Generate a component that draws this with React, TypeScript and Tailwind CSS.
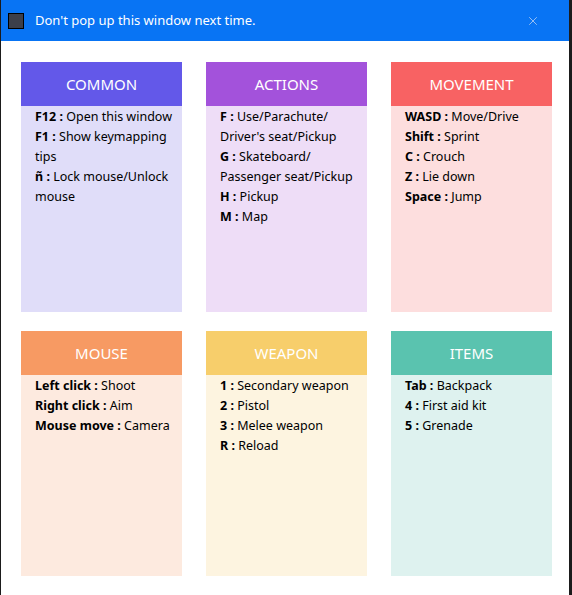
import { X } from "lucide-react";

type Item = { k: string; v: string };

const groups: {
  title: string;
  head: string;
  body: string;
  items: Item[];
}[] = [
  {
    title: "COMMON",
    head: "bg-[#6358e9]",
    body: "bg-[#e0ddf9]",
    items: [
      { k: "F12", v: "Open this window" },
      { k: "F1", v: "Show keymapping tips" },
      { k: "ñ", v: "Lock mouse/Unlock mouse" },
    ],
  },
  {
    title: "ACTIONS",
    head: "bg-[#a352db]",
    body: "bg-[#eeddf7]",
    items: [
      { k: "F", v: "Use/Parachute/ Driver's seat/Pickup" },
      { k: "G", v: "Skateboard/ Passenger seat/Pickup" },
      { k: "H", v: "Pickup" },
      { k: "M", v: "Map" },
    ],
  },
  {
    title: "MOVEMENT",
    head: "bg-[#f86263]",
    body: "bg-[#fddede]",
    items: [
      { k: "WASD", v: "Move/Drive" },
      { k: "Shift", v: "Sprint" },
      { k: "C", v: "Crouch" },
      { k: "Z", v: "Lie down" },
      { k: "Space", v: "Jump" },
    ],
  },
  {
    title: "MOUSE",
    head: "bg-[#f79a63]",
    body: "bg-[#fdeadf]",
    items: [
      { k: "Left click", v: "Shoot" },
      { k: "Right click", v: "Aim" },
      { k: "Mouse move", v: "Camera" },
    ],
  },
  {
    title: "WEAPON",
    head: "bg-[#f7ce6b]",
    body: "bg-[#fdf4e0]",
    items: [
      { k: "1", v: "Secondary weapon" },
      { k: "2", v: "Pistol" },
      { k: "3", v: "Melee weapon" },
      { k: "R", v: "Reload" },
    ],
  },
  {
    title: "ITEMS",
    head: "bg-[#5ac3af]",
    body: "bg-[#def2ef]",
    items: [
      { k: "Tab", v: "Backpack" },
      { k: "4", v: "First aid kit" },
      { k: "5", v: "Grenade" },
    ],
  },
];

export default function App() {
  return (
    <div className="w-[572px] h-[595px] bg-[#1b1b1b] pl-px font-['Noto_Sans',sans-serif]">
      <div className="w-[568px] h-[595px] bg-white">
        {/* top bar */}
        <div className="h-[41px] bg-[#0874f4] flex items-center pl-[7px] pr-[29px]">
          <div className="w-[16px] h-[16px] bg-[#3c3f4a] border border-black" />
          <span className="ml-[11px] text-[13px] text-white">
            Don't pop up this window next time.
          </span>
          <X className="ml-auto w-[14px] h-[14px] text-[#a9c9f2]" strokeWidth={1.5} />
        </div>

        {/* cards */}
        <div className="grid grid-cols-[161px_161px_161px] gap-x-[24px] gap-y-[19px] pt-[21px] pl-[20px]">
          {groups.map((g, i) => (
            <div
              key={g.title}
              className={`${g.body} ${i < 3 ? "h-[250px]" : "h-[245px]"}`}
            >
              <div
                className={`${g.head} h-[44px] flex items-center justify-center text-[15px] text-white`}
              >
                {g.title}
              </div>
              <div className="pt-px pl-[14px] pr-[8px] text-[12.5px] leading-[20px] text-black">
                {g.items.map((it) => (
                  <div key={it.k}>
                    <span className="font-bold">{it.k} : </span>
                    {it.v}
                  </div>
                ))}
              </div>
            </div>
          ))}
        </div>
      </div>
    </div>
  );
}
